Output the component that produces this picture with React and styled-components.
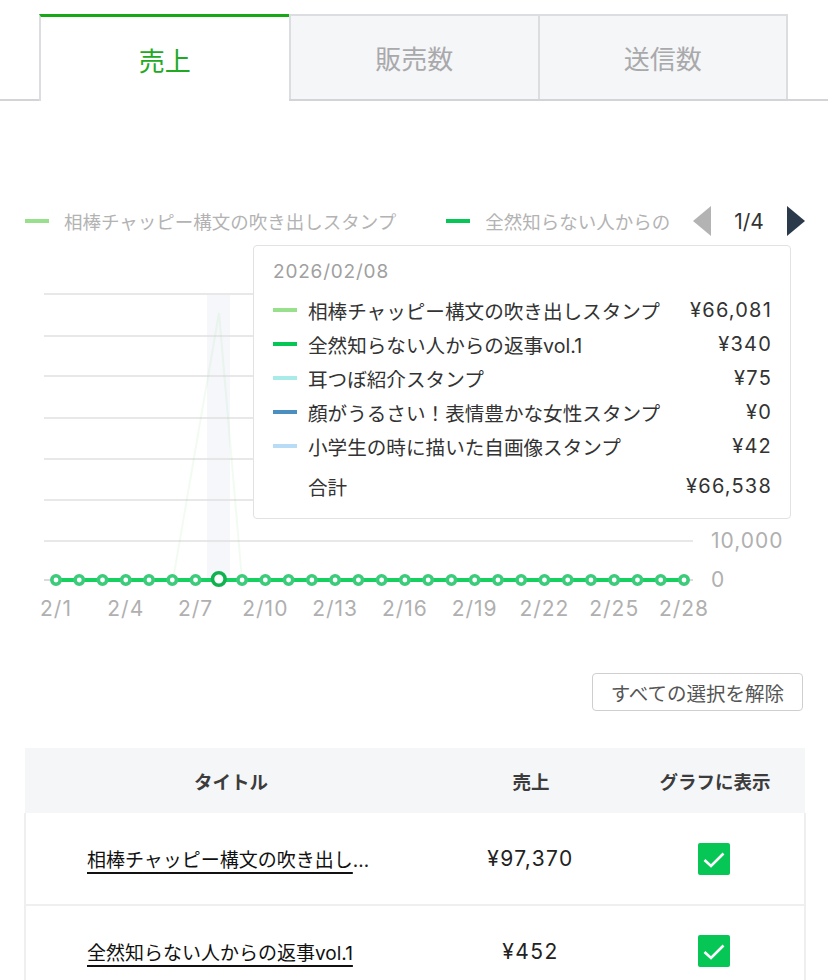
import React from "react";
import styled, { createGlobalStyle } from "styled-components";

const GlobalStyle = createGlobalStyle`
  html, body { margin: 0; padding: 0; background: #fff; }
  body {
    font-family: "Inter", "Noto Sans CJK JP", sans-serif;
    color: #333;
  }
  * { box-sizing: border-box; }
`;

const GREEN = "#06c755";

const SERIES = [
  { name: "相棒チャッピー構文の吹き出しスタンプ", color: "#98e08c", value: "¥66,081" },
  { name: "全然知らない人からの返事vol.1", color: "#06c755", value: "¥340" },
  { name: "耳つぼ紹介スタンプ", color: "#a9ebe8", value: "¥75" },
  { name: "顔がうるさい！表情豊かな女性スタンプ", color: "#4a8fbf", value: "¥0" },
  { name: "小学生の時に描いた自画像スタンプ", color: "#b9dcf6", value: "¥42" },
];

const ROWS = [
  { title: "相棒チャッピー構文の吹き出し", cut: true, sales: "¥97,370" },
  { title: "全然知らない人からの返事vol.1", cut: false, sales: "¥452" },
];

/* ---------- tabs ---------- */

const Page = styled.div`
  width: 828px;
  padding-top: 14px;
`;

const TabBar = styled.div`
  display: flex;
  align-items: flex-start;
  height: 87px;
  padding-left: 39px;
  border-bottom: 2px solid #d3d4d8;
`;

const Tab = styled.div`
  position: relative;
  flex: 0 0 249.5px;
  height: ${(p) => (p.$active ? 87 : 85)}px;
  display: flex;
  align-items: center;
  justify-content: center;
  font-size: 26px;
  color: ${(p) => (p.$active ? "#22a922" : "#a9a9ab")};
  background: ${(p) => (p.$active ? "#fff" : "#f5f6f8")};
  border-left: 2px solid #dcdde1;
  border-right: ${(p) => (p.$last ? "2px solid #dcdde1" : "none")};
  border-top: ${(p) => (p.$active ? "3px solid #16a816" : "2px solid #dcdde1")};
`;

/* ---------- chart ---------- */

const ChartArea = styled.section`
  position: relative;
  margin-top: 100px;
`;

const LegendRow = styled.div`
  display: flex;
  align-items: center;
  height: 40px;
  padding: 0 23px 0 25px;
`;

const LegendList = styled.div`
  flex: 1;
  display: flex;
  align-items: center;
  gap: 50px;
  overflow: hidden;
  white-space: nowrap;
`;

const LegendItem = styled.div`
  display: flex;
  align-items: center;
  flex-shrink: 0;
  font-size: 18.5px;
  color: #b3b3b3;
`;

const Swatch = styled.span`
  display: inline-block;
  width: 24px;
  height: 4px;
  margin-right: ${(p) => p.$gap}px;
  background: ${(p) => p.$color};
  flex-shrink: 0;
`;

const Pager = styled.div`
  display: flex;
  align-items: center;
  gap: 22px;
  margin-left: 23px;
  font-size: 21px;
  color: #333;
`;

const PageCount = styled.span`
  min-width: 32px;
  text-align: center;
`;

const ChartSvg = styled.svg`
  display: block;
`;

const Tooltip = styled.div`
  position: absolute;
  top: 44px;
  left: 253px;
  width: 538px;
  height: 274px;
  padding: 14px 19px;
  background: #fff;
  border: 1.5px solid #e2e2e2;
  border-radius: 4px;
`;

const TipDate = styled.div`
  height: 24px;
  line-height: 24px;
  font-size: 19px;
  letter-spacing: 0.8px;
  color: #a0a0a0;
  margin-bottom: 9px;
`;

const TipRow = styled.div`
  display: grid;
  grid-template-columns: 24px 1fr auto;
  column-gap: 11px;
  align-items: center;
  height: 34px;
  margin-top: ${(p) => (p.$total ? 6 : 0)}px;
  font-size: 19.6px;
  color: #333;
`;

const TipValue = styled.span`
  text-align: right;
  font-size: 20px;
  letter-spacing: 1.2px;
  margin-right: -1px;
`;

/* ---------- controls & table ---------- */

const ButtonRow = styled.div`
  display: flex;
  justify-content: flex-end;
  padding: 0 25px;
  margin-top: 43px;
`;

const ClearButton = styled.button`
  height: 38px;
  padding: 0 18px;
  background: #fff;
  border: 1.5px solid #cfcfcf;
  border-radius: 4px;
  font-family: inherit;
  font-size: 19.5px;
  color: #555;
`;

const Table = styled.table`
  width: 780px;
  margin: 37px 24px 0;
  border-collapse: collapse;
  table-layout: fixed;
`;

const HeadCell = styled.th`
  height: 65px;
  background: #f5f6f8;
  font-size: 18.5px;
  font-weight: 700;
  color: #3c3c3c;
  text-align: center;
`;

const BodyRow = styled.tr`
  border-left: 2px solid #eeeff1;
  border-right: 2px solid #eeeff1;
  border-bottom: 2px solid #eeeff1;
`;

const Cell = styled.td`
  height: 92px;
  font-size: 19px;
  color: #222;
  text-align: ${(p) => p.$align || "center"};
  padding-left: ${(p) => (p.$align === "left" ? 61 : 0)}px;
  white-space: nowrap;
`;

const TitleLink = styled.a`
  color: #111;
  text-decoration: underline;
  text-decoration-thickness: 2px;
  text-underline-offset: 5px;
`;

const Amount = styled.span`
  font-size: 21px;
  letter-spacing: 1.4px;
`;

const CheckBox = styled.span`
  display: inline-flex;
  width: 32px;
  height: 32px;
  border-radius: 2px;
  background: ${GREEN};
  vertical-align: middle;
`;

/* ---------- drawing helpers ---------- */

const X0 = 56;
const STEP = (684 - 56) / 27;
const BASE = 339;
const GRID = [53, 95, 135, 177, 218, 259, 300];

function Chart() {
  const xs = Array.from({ length: 28 }, (_, i) => X0 + i * STEP);
  const labels = [0, 3, 6, 9, 12, 15, 18, 21, 24, 27];
  return (
    <ChartSvg width="828" height="389" viewBox="0 0 828 389">
      <rect x="207" y="54" width="23" height="285" fill="#eef2f8" opacity="0.6" />
      {GRID.map((y) => (
        <line key={y} x1="44" x2="693" y1={y} y2={y} stroke="#e0e0e0" strokeWidth="1.5" />
      ))}
      <line x1="44" x2="693" y1={BASE} y2={BASE} stroke="#cfcfcf" strokeWidth="1.5" />
      <polyline
        points={`173,${BASE} 195,211 219,72 242,${BASE}`}
        fill="none"
        stroke="#98e08c"
        strokeWidth="2"
        opacity="0.12"
      />
      <line x1={X0} x2={684} y1={BASE} y2={BASE} stroke="#16d05f" strokeWidth="4" />
      {xs.map((x, i) =>
        i === 7 ? null : (
          <circle key={i} cx={x} cy={BASE} r="4.2" fill="#fff" stroke="#3ccb7b" strokeWidth="3.6" />
        )
      )}
      <circle cx={xs[7]} cy={BASE - 1} r="6.3" fill="#fff" stroke="#10b24f" strokeWidth="3.6" />
      <g fill="#b0b0b0" fontSize="21" fontFamily="Inter, sans-serif" letterSpacing="1">
        <text x="711" y="307">10,000</text>
        <text x="711" y="346">0</text>
        {labels.map((i) => (
          <text key={i} x={xs[i]} y="375" textAnchor="middle">
            {`2/${i + 1}`}
          </text>
        ))}
      </g>
    </ChartSvg>
  );
}

const Arrow = ({ dir, color }) => (
  <svg width="18" height="30" viewBox="0 0 18 30">
    <polygon points={dir === "left" ? "0,15 18,0 18,30" : "0,0 18,15 0,30"} fill={color} />
  </svg>
);

const Check = () => (
  <svg width="32" height="32" viewBox="0 0 32 32">
    <polyline points="6.5,17 13,23 25.5,10.5" fill="none" stroke="#fff" strokeWidth="2.6" />
  </svg>
);

export default function App() {
  return (
    <Page>
      <GlobalStyle />
      <TabBar>
        <Tab $active>売上</Tab>
        <Tab>販売数</Tab>
        <Tab $last>送信数</Tab>
      </TabBar>

      <ChartArea>
        <LegendRow>
          <LegendList>
            {SERIES.slice(0, 2).map((s) => (
              <LegendItem key={s.name}>
                <Swatch $color={s.color} $gap={15} />
                {s.name}
              </LegendItem>
            ))}
          </LegendList>
          <Pager>
            <Arrow dir="left" color="#b3b3b3" />
            <PageCount>1/4</PageCount>
            <Arrow dir="right" color="#2b3a4a" />
          </Pager>
        </LegendRow>
        <Chart />
        <Tooltip>
          <TipDate>2026/02/08</TipDate>
          {SERIES.map((s) => (
            <TipRow key={s.name}>
              <Swatch $color={s.color} $gap={0} />
              <span>{s.name}</span>
              <TipValue>{s.value}</TipValue>
            </TipRow>
          ))}
          <TipRow $total>
            <span />
            <span>合計</span>
            <TipValue>¥66,538</TipValue>
          </TipRow>
        </Tooltip>
      </ChartArea>

      <ButtonRow>
        <ClearButton type="button">すべての選択を解除</ClearButton>
      </ButtonRow>

      <Table>
        <colgroup>
          <col style={{ width: 412 }} />
          <col style={{ width: 188 }} />
          <col style={{ width: 180 }} />
        </colgroup>
        <thead>
          <tr>
            <HeadCell>タイトル</HeadCell>
            <HeadCell>売上</HeadCell>
            <HeadCell>グラフに表示</HeadCell>
          </tr>
        </thead>
        <tbody>
          {ROWS.map((r) => (
            <BodyRow key={r.title}>
              <Cell $align="left">
                <TitleLink href="#">{r.title}</TitleLink>
                {r.cut && "…"}
              </Cell>
              <Cell>
                <Amount>{r.sales}</Amount>
              </Cell>
              <Cell>
                <CheckBox>
                  <Check />
                </CheckBox>
              </Cell>
            </BodyRow>
          ))}
        </tbody>
      </Table>
    </Page>
  );
}
